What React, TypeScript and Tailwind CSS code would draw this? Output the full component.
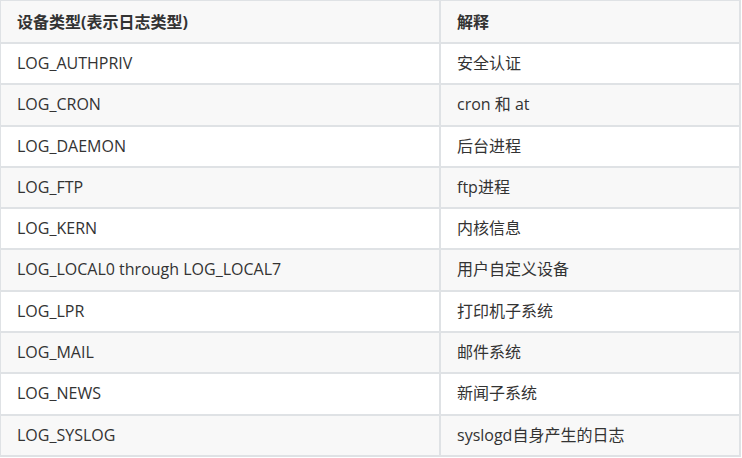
const rows: [string, string][] = [
  ["LOG_AUTHPRIV", "安全认证"],
  ["LOG_CRON", "cron 和 at"],
  ["LOG_DAEMON", "后台进程"],
  ["LOG_FTP", "ftp进程"],
  ["LOG_KERN", "内核信息"],
  ["LOG_LOCAL0 through LOG_LOCAL7", "用户自定义设备"],
  ["LOG_LPR", "打印机子系统"],
  ["LOG_MAIL", "邮件系统"],
  ["LOG_NEWS", "新闻子系统"],
  ["LOG_SYSLOG", "syslogd自身产生的日志"],
];

export default function App() {
  return (
    <div className="w-[742px] h-[458px] overflow-hidden bg-white font-['Open_Sans','Noto_Sans_CJK_SC',sans-serif] text-[16px] text-[#333333]">
      <table className="-mt-px -ml-px w-[742px] border-collapse table-fixed">
        <colgroup>
          <col className="w-[440px]" />
          <col />
        </colgroup>
        <thead>
          <tr className="bg-[#f8f8f8]">
            <th className="border-2 border-[#dfe2e5] pl-[16px] pt-[9px] pb-[8px] text-left font-bold leading-[24px]">
              设备类型(表示日志类型)
            </th>
            <th className="border-2 border-[#dfe2e5] pl-[16px] pt-[9px] pb-[8px] text-left font-bold leading-[24px]">
              解释
            </th>
          </tr>
        </thead>
        <tbody>
          {rows.map(([name, desc], i) => (
            <tr key={name} className={i % 2 === 1 ? "bg-[#f8f8f8]" : "bg-white"}>
              <td className="border-2 border-[#dfe2e5] pl-[16px] py-[8px] leading-[23.3px]">{name}</td>
              <td className="border-2 border-[#dfe2e5] pl-[16px] py-[8px] leading-[23.3px]">{desc}</td>
            </tr>
          ))}
        </tbody>
      </table>
    </div>
  );
}
